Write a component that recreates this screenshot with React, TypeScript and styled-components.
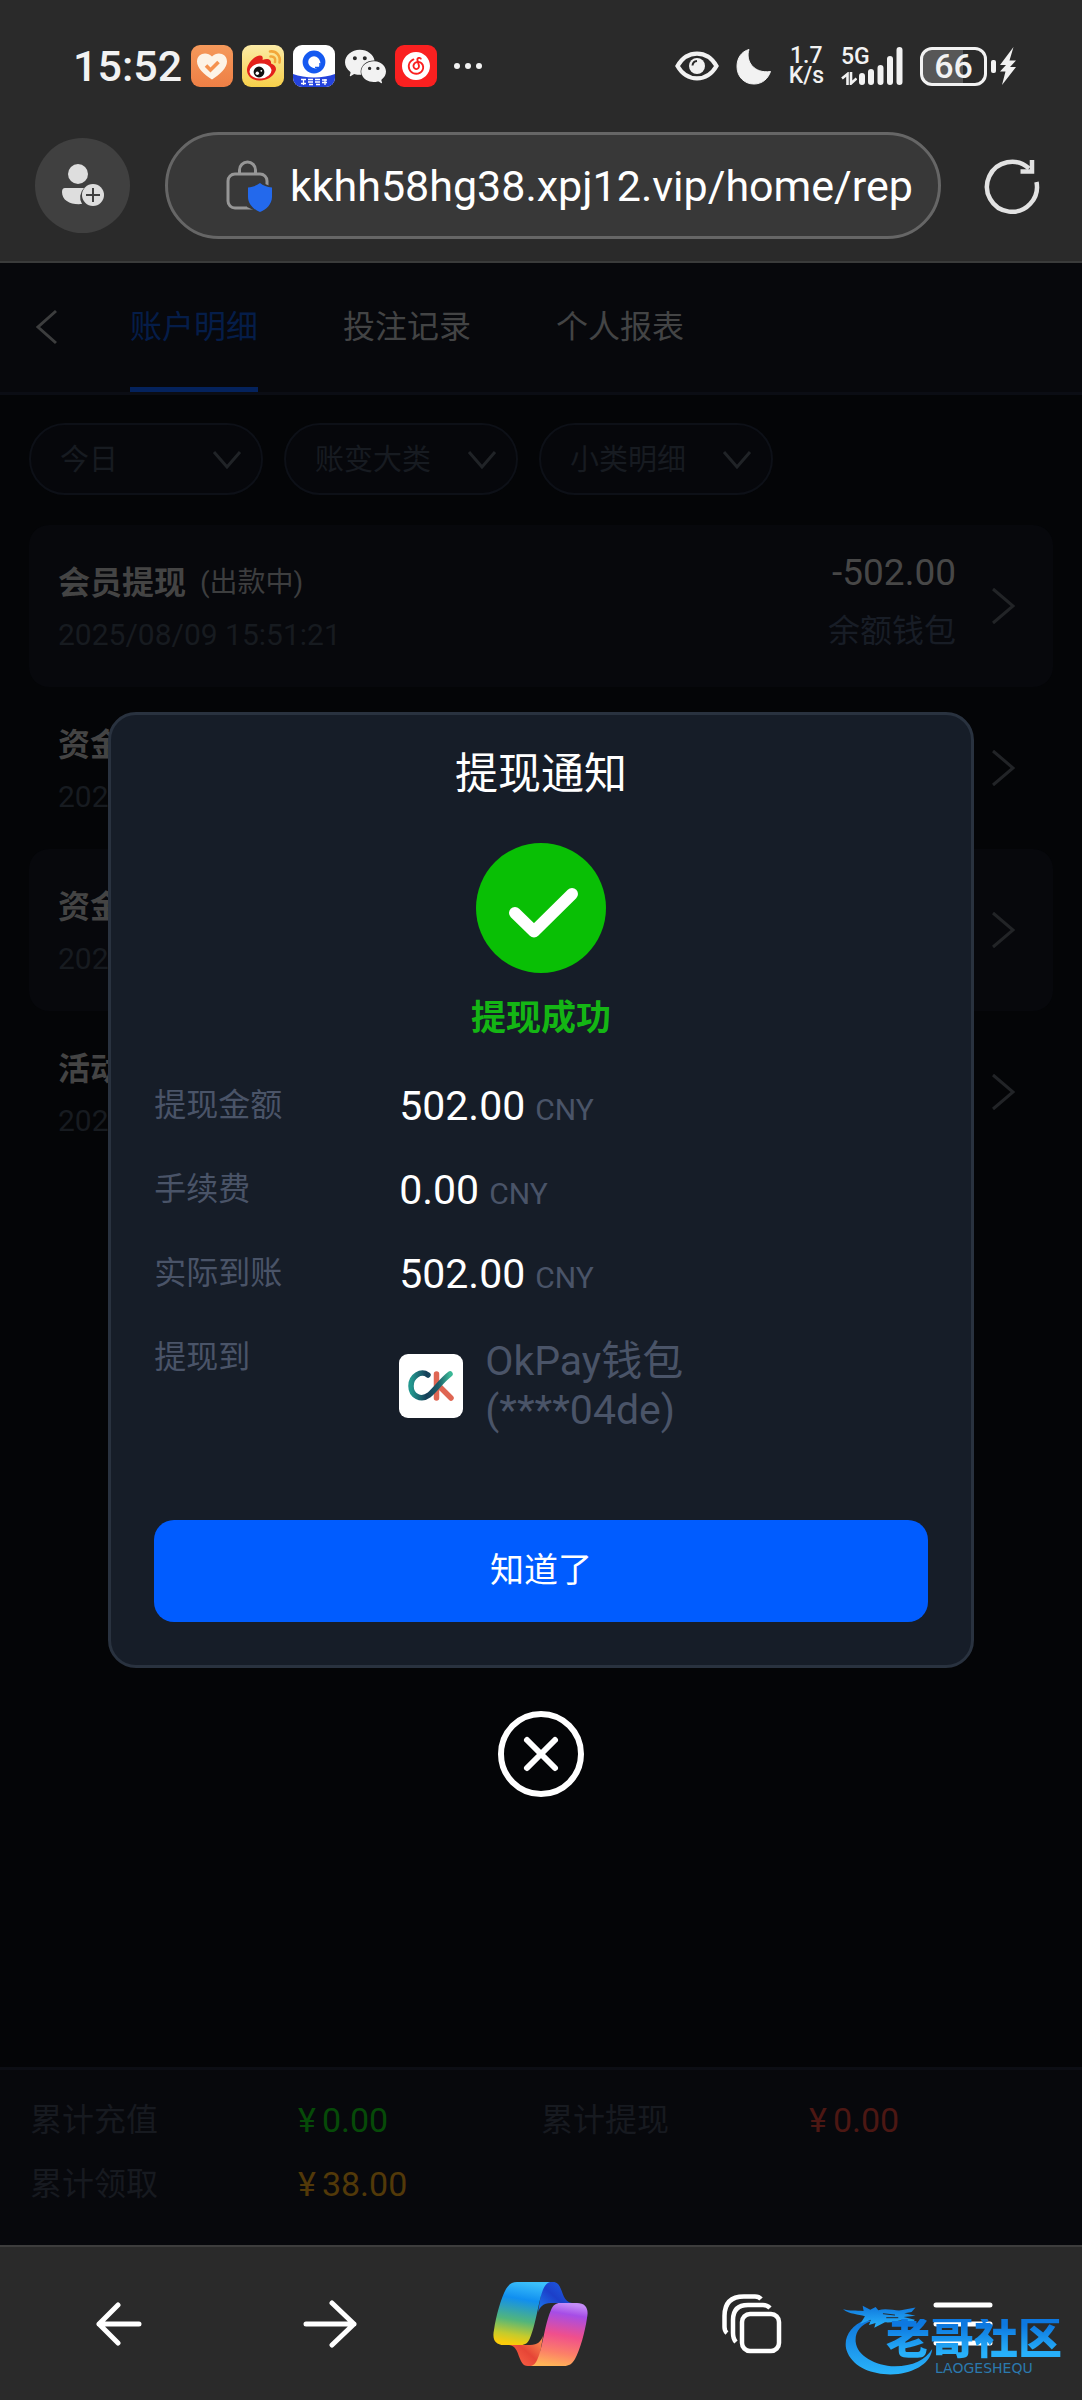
import React from "react";
import styled, { createGlobalStyle } from "styled-components";
import { SiNeteasecloudmusic, SiWechat } from "react-icons/si";

const GlobalStyle = createGlobalStyle`
  * { box-sizing: border-box; }
  body {
    margin: 0;
    background: #040507;
    font-family: Roboto, "Noto Sans CJK SC", sans-serif;
    -webkit-font-smoothing: antialiased;
  }
  button, input, select { font-family: inherit; }
  button { cursor: pointer; padding: 0; border: 0; background: none; color: inherit; }
  svg { display: block; flex: none; }
  h1, h2, p, dl, dd, dt, ul { margin: 0; padding: 0; }
`;

const Screen = styled.div`
  display: flex;
  flex-direction: column;
  min-height: 100vh;
`;

/* ---------- phone status bar and browser chrome ---------- */

const Chrome = styled.header`
  background: #2a2a2a;
  border-bottom: 2px solid #3a3b3b;
  padding-bottom: 22px;
`;

const StatusBar = styled.div`
  display: flex;
  align-items: center;
  justify-content: space-between;
  height: 132px;
  padding: 0 66px 0 73px;
  color: #f2f2f2;
`;

const StatusGroup = styled.div<{ $gap: number }>`
  display: flex;
  align-items: center;
  gap: ${(p) => p.$gap}px;
`;

const Clock = styled.time`
  font-size: 43px;
  font-weight: 500;
  line-height: 48px;
`;

const AppBadge = styled.span<{ $bg: string }>`
  display: flex;
  align-items: center;
  justify-content: center;
  width: 42px;
  height: 42px;
  border-radius: 9px;
  background: ${(p) => p.$bg};
  overflow: hidden;
`;

const NetSpeed = styled.span`
  display: flex;
  flex-direction: column;
  align-items: center;
  font-size: 23px;
  font-weight: 500;
  line-height: 20px;
`;

const Network = styled.span`
  display: grid;
  grid-template-columns: 18px auto;
  align-items: end;
`;

const NetworkType = styled.span`
  grid-area: 1 / 1 / 2 / 3;
  align-self: start;
  font-size: 23px;
  font-weight: 500;
  line-height: 20px;
`;

const SignalBars = styled.svg`
  grid-area: 1 / 2 / 3 / 3;
`;

const DataArrows = styled.svg`
  grid-area: 2 / 1 / 3 / 2;
`;

const BatteryWrap = styled.span`
  display: flex;
  align-items: center;
  gap: 4px;
`;

const Battery = styled.span`
  display: flex;
  align-items: center;
  justify-content: center;
  width: 67px;
  height: 39px;
  border: 3px solid #f2f2f2;
  border-radius: 12px;
  background: linear-gradient(to right, #575757 66%, #2a2a2a 66%);
  font-size: 34px;
  font-weight: 500;
  line-height: 34px;
`;

const BatteryTip = styled.span`
  width: 5px;
  height: 13px;
  border-radius: 2px;
  background: #f2f2f2;
`;

const AddressRow = styled.div`
  display: flex;
  align-items: center;
  padding: 0 42px 0 35px;
`;

const Avatar = styled.button`
  display: flex;
  align-items: center;
  justify-content: center;
  width: 95px;
  height: 95px;
  border-radius: 50%;
  background: #404040;
`;

const AddressBox = styled.label`
  flex: 1;
  display: flex;
  align-items: center;
  gap: 18px;
  height: 107px;
  min-width: 0;
  margin: 0 43px 0 35px;
  padding: 0 20px 0 58px;
  border: 3px solid #666;
  border-radius: 54px;
  background: #383838;
`;

const AddressInput = styled.input`
  flex: 1;
  min-width: 0;
  padding: 0;
  border: 0;
  outline: 0;
  background: none;
  color: #fff;
  font-size: 43px;
  line-height: 60px;
`;

const BottomBar = styled.nav`
  position: relative;
  display: grid;
  grid-template-columns: repeat(5, 1fr);
  align-items: center;
  height: 155px;
  padding: 0 14px;
  border-top: 2px solid #3d3d3d;
  background: #2a2a2a;
`;

const BarButton = styled.button`
  display: flex;
  align-items: center;
  justify-content: center;
  height: 120px;
`;

const Watermark = styled.div`
  position: absolute;
  right: 16px;
  bottom: 23px;
  width: 223px;
  height: 80px;
  pointer-events: none;
`;

const WatermarkText = styled.div`
  position: absolute;
  left: 43px;
  top: 22px;
  font-size: 44px;
  font-weight: 900;
  line-height: 40px;
  white-space: nowrap;
  color: transparent;
  background: linear-gradient(#0d78e0 15%, #27b0fa 85%);
  background-clip: text;
  -webkit-background-clip: text;
`;

const WatermarkLatin = styled.div`
  position: absolute;
  left: 92px;
  top: 64px;
  font-family: "DejaVu Sans", sans-serif;
  font-size: 14px;
  line-height: 14px;
  color: #2b79ae;
`;

/* ---------- account page ---------- */

const Main = styled.main`
  position: relative;
  flex: 1;
  display: flex;
  flex-direction: column;
`;

const TabBar = styled.div`
  display: flex;
  align-items: stretch;
  height: 132px;
  padding-left: 35px;
  border-bottom: 3px solid #0b0d14;
  background: #07080c;
`;

const BackButton = styled.button`
  display: flex;
  align-items: center;
  width: 95px;
  padding-bottom: 2px;
`;

const Tabs = styled.div`
  display: flex;
  gap: 85px;
`;

const Tab = styled.button<{ $active?: boolean }>`
  padding: 3px 0 0;
  border-bottom: 5px solid ${(p) => (p.$active ? "#04225c" : "transparent")};
  color: ${(p) => (p.$active ? "#051d49" : "#434445")};
  font-size: 32px;
  line-height: 40px;
`;

const Filters = styled.div`
  display: flex;
  gap: 21px;
  padding: 28px 29px 30px;
`;

const FilterPill = styled.label`
  position: relative;
  width: 234px;

  svg {
    position: absolute;
    right: 21px;
    top: 28px;
    pointer-events: none;
  }
`;

const FilterSelect = styled.select`
  appearance: none;
  width: 100%;
  height: 72px;
  padding: 2px 60px 0 29px;
  border: 2px solid #0d1017;
  border-radius: 36px;
  background: #06070b;
  color: #171b21;
  font-size: 29px;
  line-height: 40px;
`;

const Records = styled.ul`
  list-style: none;
  padding: 0 29px;
`;

const Record = styled.li`
  display: flex;
  align-items: center;
  height: 162px;
  padding: 0 38px 0 29px;
  border-radius: 20px;

  &:nth-child(odd) { background: #07080c; }
`;

const RecordText = styled.div`
  flex: 1;
  padding-top: 5px;
`;

const RecordTitle = styled.h2`
  display: flex;
  align-items: center;
  gap: 14px;
  color: #444;
  font-size: 32px;
  font-weight: 700;
  line-height: 52px;
`;

const RecordStatus = styled.span`
  color: #3d3e3f;
  font-size: 28px;
  font-weight: 400;
`;

const RecordDate = styled.time`
  display: block;
  color: #171b20;
  font-size: 30px;
  line-height: 52px;
`;

const RecordSide = styled.div`
  margin-right: 35px;
  text-align: right;
  padding-bottom: 8px;
`;

const RecordAmount = styled.p`
  color: #474747;
  font-size: 37px;
  line-height: 58px;
`;

const RecordWallet = styled.p`
  color: #181d26;
  font-size: 32px;
  line-height: 58px;
`;

const Totals = styled.dl`
  display: grid;
  grid-template-columns: 1fr 1fr;
  align-content: start;
  height: 178px;
  margin-top: auto;
  padding: 18px 30px 0;
  border-top: 3px solid #0c0e14;
  background: #07080c;
`;

const Total = styled.div`
  display: flex;
  align-items: center;
  height: 64px;
  font-size: 32px;
  line-height: 64px;
`;

const TotalLabel = styled.dt`
  width: 268px;
  color: #171a20;
`;

const TotalValue = styled.dd<{ $color: string }>`
  display: flex;
  gap: 6px;
  color: ${(p) => p.$color};
  font-size: 34px;
`;

/* ---------- notice dialog ---------- */

const Overlay = styled.div`
  position: absolute;
  inset: 0;
  display: flex;
  flex-direction: column;
  align-items: center;
  justify-content: center;
  gap: 43px;
`;

const Dialog = styled.section`
  display: flex;
  flex-direction: column;
  align-items: center;
  width: 80%;
  padding: 29px 43px 43px;
  border: 3px solid #29323f;
  border-radius: 28px;
  background: #161d28;
`;

const DialogTitle = styled.h1`
  color: #fff;
  font-size: 43px;
  font-weight: 400;
  line-height: 60px;
  margin-bottom: 39px;
`;

const Success = styled.p`
  margin: 22px 0 20px;
  color: #14b614;
  font-size: 35px;
  font-weight: 700;
  line-height: 48px;
`;

const Details = styled.dl`
  width: 100%;
  margin-bottom: 85px;
`;

const Detail = styled.div`
  display: flex;
`;

const DetailLabel = styled.dt`
  width: 245px;
  color: #4a5468;
  font-size: 32px;
  line-height: 84px;
`;

const DetailValue = styled.dd`
  height: 84px;
  color: #fff;
  font-size: 41px;
  line-height: 86px;
`;

const Currency = styled.span`
  margin-left: 10px;
  color: #4a5468;
  font-size: 30px;
`;

const WalletValue = styled.dd`
  display: flex;
  align-items: center;
  gap: 22px;
  padding-top: 22px;
  color: #4a5468;
  font-size: 41px;
  line-height: 49px;
`;

const WalletLogo = styled.span`
  display: flex;
  align-items: center;
  justify-content: center;
  width: 64px;
  height: 64px;
  border-radius: 9px;
  background: #fff;
`;

const ConfirmButton = styled.button`
  width: 100%;
  height: 102px;
  padding-bottom: 2px;
  border-radius: 20px;
  background: #005cff;
  color: #fff;
  font-size: 34px;
  line-height: 48px;
`;

const CloseButton = styled.button`
  display: block;
  border-radius: 50%;
`;

/* ---------- drawings ---------- */

const HeartIcon = () => (
  <svg width="42" height="42" viewBox="0 0 42 42" aria-hidden="true">
    <path d="M21 34.500C13 29.500 6 23 6 16.500C6 8 16 6 21 11.500C26 6 36 8 36 16.500C36 23 29 29.500 21 34.500Z" fill="#fdf3e6" />
    <path d="M15 20.500L19.500 25L27.500 17" fill="none" stroke="#f5924f" strokeWidth="3.600" />
  </svg>
);

const WeiboIcon = () => (
  <svg width="42" height="42" viewBox="0 0 42 42" aria-hidden="true">
    <path d="M5 25C5 19 12 11 18 10.500C21 10.500 21 13 20.500 15C25 13 29.500 13.500 29 18.500C33 20 35 23 33.500 26C31 32 24 36 17 35.500C10 35 5 31 5 25Z" fill="#e3201b" />
    <ellipse cx="18.500" cy="26" rx="11" ry="7.500" fill="#fff" transform="rotate(-6 18.500 26)" />
    <circle cx="17" cy="27" r="5.400" fill="#111" />
    <circle cx="15.300" cy="28.300" r="1.700" fill="#fff" />
    <circle cx="19.300" cy="25.800" r=".9" fill="#fff" />
    <path d="M28 6.500C34 5.500 39 11 37.500 17.500M28.500 11.500C32 11 34 13.500 33 17" fill="none" stroke="#f2a73a" strokeWidth="2.600" strokeLinecap="round" />
  </svg>
);

const QIcon = () => (
  <svg width="42" height="42" viewBox="0 0 42 42" aria-hidden="true">
    <path d="M0 29C12 33.500 30 33.500 42 29V42H0Z" fill="#2443dc" />
    <circle cx="21" cy="17" r="8.600" fill="none" stroke="#1559f0" strokeWidth="5.600" />
    <circle cx="22.500" cy="18.500" r="5" fill="#fff" />
    <path d="M22 22.500H27V18" fill="none" stroke="#1559f0" strokeWidth="1.500" />
    <path d="M8 34.500h5M8 38.500h5M10.500 34v6M15 34.500h5M15 37h5M16 39.500h4M22 34.500h5M22 37h5M23 39.500h4M29 35h5M29 37.500h5M32 34v6" stroke="#fff" strokeWidth="1.300" />
  </svg>
);

const EyeIcon = () => (
  <svg width="44" height="30" viewBox="0 0 44 30" aria-hidden="true">
    <path d="M2.500 15C12-1.500 32-1.500 41.500 15C32 31.500 12 31.500 2.500 15Z" fill="none" stroke="#f2f2f2" strokeWidth="4.200" />
    <circle cx="22" cy="15" r="8" fill="#f2f2f2" />
    <path d="M17.500 14.500a5 5 0 0 1 4.500-4.500" fill="none" stroke="#2a2a2a" strokeWidth="2" />
  </svg>
);

const MoonIcon = () => (
  <svg width="36" height="37" viewBox="0 0 36 37" aria-hidden="true">
    <path d="M13 1.500C9 13 18 26 34.500 23.500C32 31 26 36 18 36C8 36 1 28.500 1 18.500C1 10 5.500 3.500 13 1.500Z" fill="#f2f2f2" stroke="#f2f2f2" strokeLinejoin="round" />
  </svg>
);

const Bolt = () => (
  <svg width="16" height="38" viewBox="0 0 16 38" aria-hidden="true">
    <path d="M13.500 0L0 18H6L0 24.500H5.500L2 38L16 20H10L16 13.500H9.500Z" fill="#f2f2f2" />
  </svg>
);

const ProfileIcon = () => (
  <svg width="44" height="46" viewBox="0 0 44 46" aria-hidden="true">
    <circle cx="17" cy="11" r="10" fill="#dedede" />
    <path d="M4 25H23A13 13 0 0 0 21 41C10 42 1 38 1 29Q1 25 4 25Z" fill="#dedede" />
    <circle cx="32" cy="32" r="11" fill="#dedede" />
    <path d="M32 25V39M25 32H39" stroke="#404040" strokeWidth="2" />
  </svg>
);

const LockIcon = () => (
  <svg width="46" height="52" viewBox="0 0 46 52" aria-hidden="true">
    <rect x="2" y="14" width="39" height="34" rx="7" fill="none" stroke="#969696" strokeWidth="3" />
    <path d="M13.500 14V10A8 8 0 0 1 29.500 10V14" fill="none" stroke="#969696" strokeWidth="3" />
    <path d="M34 22L46.500 27V42L34 53L21 47V26Z" fill="#383838" />
    <path d="M34 23C37 25.500 41 27 46 27.500V37C46 44 40 50 34 52C28 50 22 44 22 37V27.500C27 27 31 25.500 34 23Z" fill="#2369ec" />
  </svg>
);

const ReloadIcon = () => (
  <svg width="56" height="58" viewBox="0 0 56 58" aria-hidden="true">
    <path d="M52.500 25A25 25 0 1 1 45 11.500" fill="none" stroke="#e2e2e2" strokeWidth="4.500" />
    <path d="M48 3V14.500H36.500" fill="none" stroke="#e2e2e2" strokeWidth="4.500" />
  </svg>
);

const Chevron = ({ dir, color }: { dir: "left" | "right" | "down"; color: string }) => {
  const shapes = {
    left: { w: 24, h: 36, d: "M21 2L3 18L21 34" },
    right: { w: 24, h: 38, d: "M2 2L22 19L2 36" },
    down: { w: 30, h: 18, d: "M2 1L15 16L28 1" },
  };
  const s = shapes[dir];
  return (
    <svg width={s.w} height={s.h} viewBox={`0 0 ${s.w} ${s.h}`} aria-hidden="true">
      <path d={s.d} fill="none" stroke={color} strokeWidth="3" />
    </svg>
  );
};

const CheckCircle = () => (
  <svg width="130" height="130" viewBox="0 0 130 130" aria-hidden="true">
    <circle cx="65" cy="65" r="65" fill="#09bf05" />
    <path d="M39 70L58 88.500L96 51" fill="none" stroke="#fff" strokeWidth="12" strokeLinecap="round" strokeLinejoin="round" />
  </svg>
);

const OkLogo = () => (
  <svg width="48" height="34" viewBox="0 0 48 34" aria-hidden="true">
    <defs>
      <linearGradient id="ok-ring" x1="0" y1="0" x2="1" y2="0">
        <stop offset="0" stopColor="#23988f" />
        <stop offset=".4" stopColor="#153f58" />
        <stop offset=".7" stopColor="#1c5c68" />
        <stop offset="1" stopColor="#3bb796" />
      </linearGradient>
    </defs>
    <path d="M29.500 5V29M33 18L44 29" stroke="#df6653" strokeWidth="5.500" strokeLinecap="round" />
    <path d="M21 6C14 1 4 7 4 17C4 27 14 32 22 26C29 20 35 11 43 5" fill="none" stroke="url(#ok-ring)" strokeWidth="5.500" strokeLinecap="round" />
  </svg>
);

const CloseIcon = () => (
  <svg width="86" height="86" viewBox="0 0 86 86" aria-hidden="true">
    <circle cx="43" cy="43" r="40" fill="none" stroke="#fff" strokeWidth="6" />
    <path d="M29 29L57 57M57 29L29 57" stroke="#fff" strokeWidth="6" strokeLinecap="round" />
  </svg>
);

const CopilotIcon = () => (
  <svg width="95" height="84" viewBox="0 0 95 84" aria-hidden="true">
    <defs>
      <linearGradient id="cp-left" x1=".6" y1="0" x2=".45" y2="1">
        <stop offset="0" stopColor="#3bc0fb" />
        <stop offset=".28" stopColor="#108ff0" />
        <stop offset=".62" stopColor="#52b57c" />
        <stop offset=".85" stopColor="#c5cb2c" />
        <stop offset="1" stopColor="#fbcb0a" />
      </linearGradient>
      <linearGradient id="cp-right" x1=".45" y1="1" x2=".6" y2="0">
        <stop offset="0" stopColor="#c58cf8" />
        <stop offset=".16" stopColor="#a64de6" />
        <stop offset=".5" stopColor="#f04f8c" />
        <stop offset=".78" stopColor="#fc7f68" />
        <stop offset="1" stopColor="#ffb457" />
      </linearGradient>
      <linearGradient id="cp-top" x1="0" y1="1" x2="1" y2="0">
        <stop offset="0" stopColor="#1a7cf0" />
        <stop offset=".5" stopColor="#1c3fc9" />
        <stop offset="1" stopColor="#1e62e4" />
      </linearGradient>
      <linearGradient id="cp-bottom" x1="0" y1="1" x2="1" y2="0">
        <stop offset="0" stopColor="#ff9a55" />
        <stop offset=".5" stopColor="#e64536" />
        <stop offset="1" stopColor="#ff6a4a" />
      </linearGradient>
    </defs>
    <path d="M50 0H60C71 0 67 20 79 21H58C50 21 47 25 45 30Z" fill="url(#cp-top)" />
    <path d="M57 0C46 2 46 35 37 56C35 61 32 63 28 63H11C2 63-1 57 1 48C3 34 8 16 13 7C16 2 19 0 24 0Z" fill="url(#cp-left)" />
    <g transform="rotate(180 47.500 42)">
      <path d="M50 0H60C71 0 67 20 79 21H58C50 21 47 25 45 30Z" fill="url(#cp-bottom)" />
      <path d="M57 0C46 2 46 35 37 56C35 61 32 63 28 63H11C2 63-1 57 1 48C3 34 8 16 13 7C16 2 19 0 24 0Z" fill="url(#cp-right)" />
    </g>
  </svg>
);

const ArrowLeft = () => (
  <svg width="46" height="44" viewBox="0 0 46 44" aria-hidden="true">
    <path d="M43 22H3M22 3L3 22L22 41" fill="none" stroke="#fff" strokeWidth="5" strokeLinecap="round" strokeLinejoin="round" />
  </svg>
);

const ArrowRight = () => (
  <svg width="54" height="48" viewBox="0 0 54 48" aria-hidden="true">
    <path d="M3 24H51M29 3L51 24L29 45" fill="none" stroke="#fff" strokeWidth="5" strokeLinecap="round" strokeLinejoin="round" />
  </svg>
);

const TabsIcon = () => (
  <svg width="60" height="60" viewBox="0 0 60 60" aria-hidden="true">
    <g fill="none" stroke="#fff" strokeWidth="4.500">
      <rect x="20" y="20" width="37" height="37" rx="8" />
      <path d="M14 48Q11 45 11 39V26Q11 11 26 11H41Q45 11 48 14" />
      <path d="M5 39Q2.500 37 2.500 33V22Q2.500 2.500 22 2.500H33Q37 2.500 39 5" />
    </g>
  </svg>
);

const MenuIcon = () => (
  <svg width="60" height="46" viewBox="0 0 60 46" aria-hidden="true">
    <path d="M3 4H57M3 23H57M3 42H57" stroke="#fff" strokeWidth="5" strokeLinecap="round" />
  </svg>
);

const DragonMark = () => (
  <svg width="223" height="80" viewBox="670 200 670 240" aria-hidden="true">
    <defs>
      <linearGradient id="dragon" x1="0" y1="0" x2="0" y2="1">
        <stop offset="0" stopColor="#0f76dc" />
        <stop offset="1" stopColor="#29b4fb" />
      </linearGradient>
    </defs>
    <g fill="url(#dragon)">
      <path d="M736 270C690 286 666 330 684 368C706 418 776 438 836 431C890 424 934 396 938 356C918 388 880 408 826 408C766 406 712 376 708 334C706 304 722 284 756 272Z" />
      <path d="M670 237C690 243 708 240 732 242L729 226L752 238L768 230L776 240C800 232 826 242 844 240L888 231L876 245L854 249L888 256L852 260L886 268L878 279L848 270C830 272 816 278 796 276L764 292L768 278L748 284L754 268L722 280L736 258C716 252 690 252 670 237Z" />
    </g>
    <path d="M790 250L826 254M800 262L836 262" stroke="#2a2a2a" strokeWidth="3" />
  </svg>
);

/* ---------- data ---------- */

const tabs = ["账户明细", "投注记录", "个人报表"];

const filters = ["今日", "账变大类", "小类明细"];

const records = [
  { title: "会员提现", status: "(出款中)", date: "2025/08/09 15:51:21", amount: "-502.00", wallet: "余额钱包" },
  { title: "资金", date: "2025" },
  { title: "资金", date: "2025" },
  { title: "活动", date: "2025" },
];

const totals = [
  { label: "累计充值", value: "0.00", color: "#064a08" },
  { label: "累计提现", value: "0.00", color: "#4c1713" },
  { label: "累计领取", value: "38.00", color: "#523909" },
];

const details = [
  { label: "提现金额", value: "502.00" },
  { label: "手续费", value: "0.00" },
  { label: "实际到账", value: "502.00" },
];

export default function App() {
  return (
    <Screen>
      <GlobalStyle />

      <Chrome>
        <StatusBar>
          <StatusGroup $gap={9}>
            <Clock>15:52</Clock>
            <AppBadge $bg="linear-gradient(#f5995b, #ee7f45)"><HeartIcon /></AppBadge>
            <AppBadge $bg="linear-gradient(#fbeaa6, #f7d04a)"><WeiboIcon /></AppBadge>
            <AppBadge $bg="#fff"><QIcon /></AppBadge>
            <AppBadge $bg="transparent"><SiWechat size={41} color="#f2f2f2" /></AppBadge>
            <AppBadge $bg="#fa2020"><SiNeteasecloudmusic size={28} color="#fff" /></AppBadge>
            <svg width="44" height="8" viewBox="-7 0 44 8" aria-hidden="true">
              <g fill="#f2f2f2">
                <circle cx="4" cy="4" r="3" />
                <circle cx="15" cy="4" r="3" />
                <circle cx="26" cy="4" r="3" />
              </g>
            </svg>
          </StatusGroup>
          <StatusGroup $gap={17}>
            <EyeIcon />
            <MoonIcon />
            <NetSpeed><span>1.7</span><span>K/s</span></NetSpeed>
            <Network>
              <NetworkType>5G</NetworkType>
              <DataArrows width="16" height="13" viewBox="0 0 16 13" aria-hidden="true">
                <path d="M6.500 13V2L1 6.500M10 0V11.500L15.500 6.500" fill="none" stroke="#f2f2f2" strokeWidth="2.600" />
              </DataArrows>
              <SignalBars width="44" height="38" viewBox="0 0 44 38" aria-hidden="true">
                <path d="M3 29V35M12 25V35M21.500 21V35M31 12V35M40.500 3V35" stroke="#f2f2f2" strokeWidth="6" strokeLinecap="round" />
              </SignalBars>
            </Network>
            <BatteryWrap>
              <Battery>66</Battery>
              <BatteryTip />
              <Bolt />
            </BatteryWrap>
          </StatusGroup>
        </StatusBar>
        <AddressRow>
          <Avatar aria-label="账户"><ProfileIcon /></Avatar>
          <AddressBox>
            <LockIcon />
            <AddressInput aria-label="网址" readOnly value="kkhh58hg38.xpj12.vip/home/rep" />
          </AddressBox>
          <button aria-label="刷新"><ReloadIcon /></button>
        </AddressRow>
      </Chrome>

      <Main>
        <TabBar>
          <BackButton aria-label="返回"><Chevron dir="left" color="#3c3d3e" /></BackButton>
          <Tabs>
            {tabs.map((name, i) => (
              <Tab key={name} $active={i === 0}>{name}</Tab>
            ))}
          </Tabs>
        </TabBar>

        <Filters>
          {filters.map((name) => (
            <FilterPill key={name}>
              <FilterSelect aria-label={name}><option>{name}</option></FilterSelect>
              <Chevron dir="down" color="#202327" />
            </FilterPill>
          ))}
        </Filters>

        <Records>
          {records.map((r, i) => (
            <Record key={i}>
              <RecordText>
                <RecordTitle>
                  {r.title}
                  {r.status && <RecordStatus>{r.status}</RecordStatus>}
                </RecordTitle>
                <RecordDate>{r.date}</RecordDate>
              </RecordText>
              {r.amount && (
                <RecordSide>
                  <RecordAmount>{r.amount}</RecordAmount>
                  <RecordWallet>{r.wallet}</RecordWallet>
                </RecordSide>
              )}
              <Chevron dir="right" color="#222427" />
            </Record>
          ))}
        </Records>

        <Totals>
          {totals.map((t) => (
            <Total key={t.label}>
              <TotalLabel>{t.label}</TotalLabel>
              <TotalValue $color={t.color}><span>¥</span>{t.value}</TotalValue>
            </Total>
          ))}
        </Totals>

        <Overlay>
          <Dialog role="dialog" aria-labelledby="notice-title">
            <DialogTitle id="notice-title">提现通知</DialogTitle>
            <CheckCircle />
            <Success>提现成功</Success>
            <Details>
              {details.map((d) => (
                <Detail key={d.label}>
                  <DetailLabel>{d.label}</DetailLabel>
                  <DetailValue>{d.value}<Currency>CNY</Currency></DetailValue>
                </Detail>
              ))}
              <Detail>
                <DetailLabel>提现到</DetailLabel>
                <WalletValue>
                  <WalletLogo><OkLogo /></WalletLogo>
                  <span>OkPay钱包<br />(****04de)</span>
                </WalletValue>
              </Detail>
            </Details>
            <ConfirmButton>知道了</ConfirmButton>
          </Dialog>
          <CloseButton aria-label="关闭"><CloseIcon /></CloseButton>
        </Overlay>
      </Main>

      <BottomBar>
        <BarButton aria-label="后退"><ArrowLeft /></BarButton>
        <BarButton aria-label="前进"><ArrowRight /></BarButton>
        <BarButton aria-label="Copilot"><CopilotIcon /></BarButton>
        <BarButton aria-label="标签页"><TabsIcon /></BarButton>
        <BarButton aria-label="菜单"><MenuIcon /></BarButton>
        <Watermark>
          <DragonMark />
          <WatermarkText>老哥社区</WatermarkText>
          <WatermarkLatin>LAOGESHEQU</WatermarkLatin>
        </Watermark>
      </BottomBar>
    </Screen>
  );
}
